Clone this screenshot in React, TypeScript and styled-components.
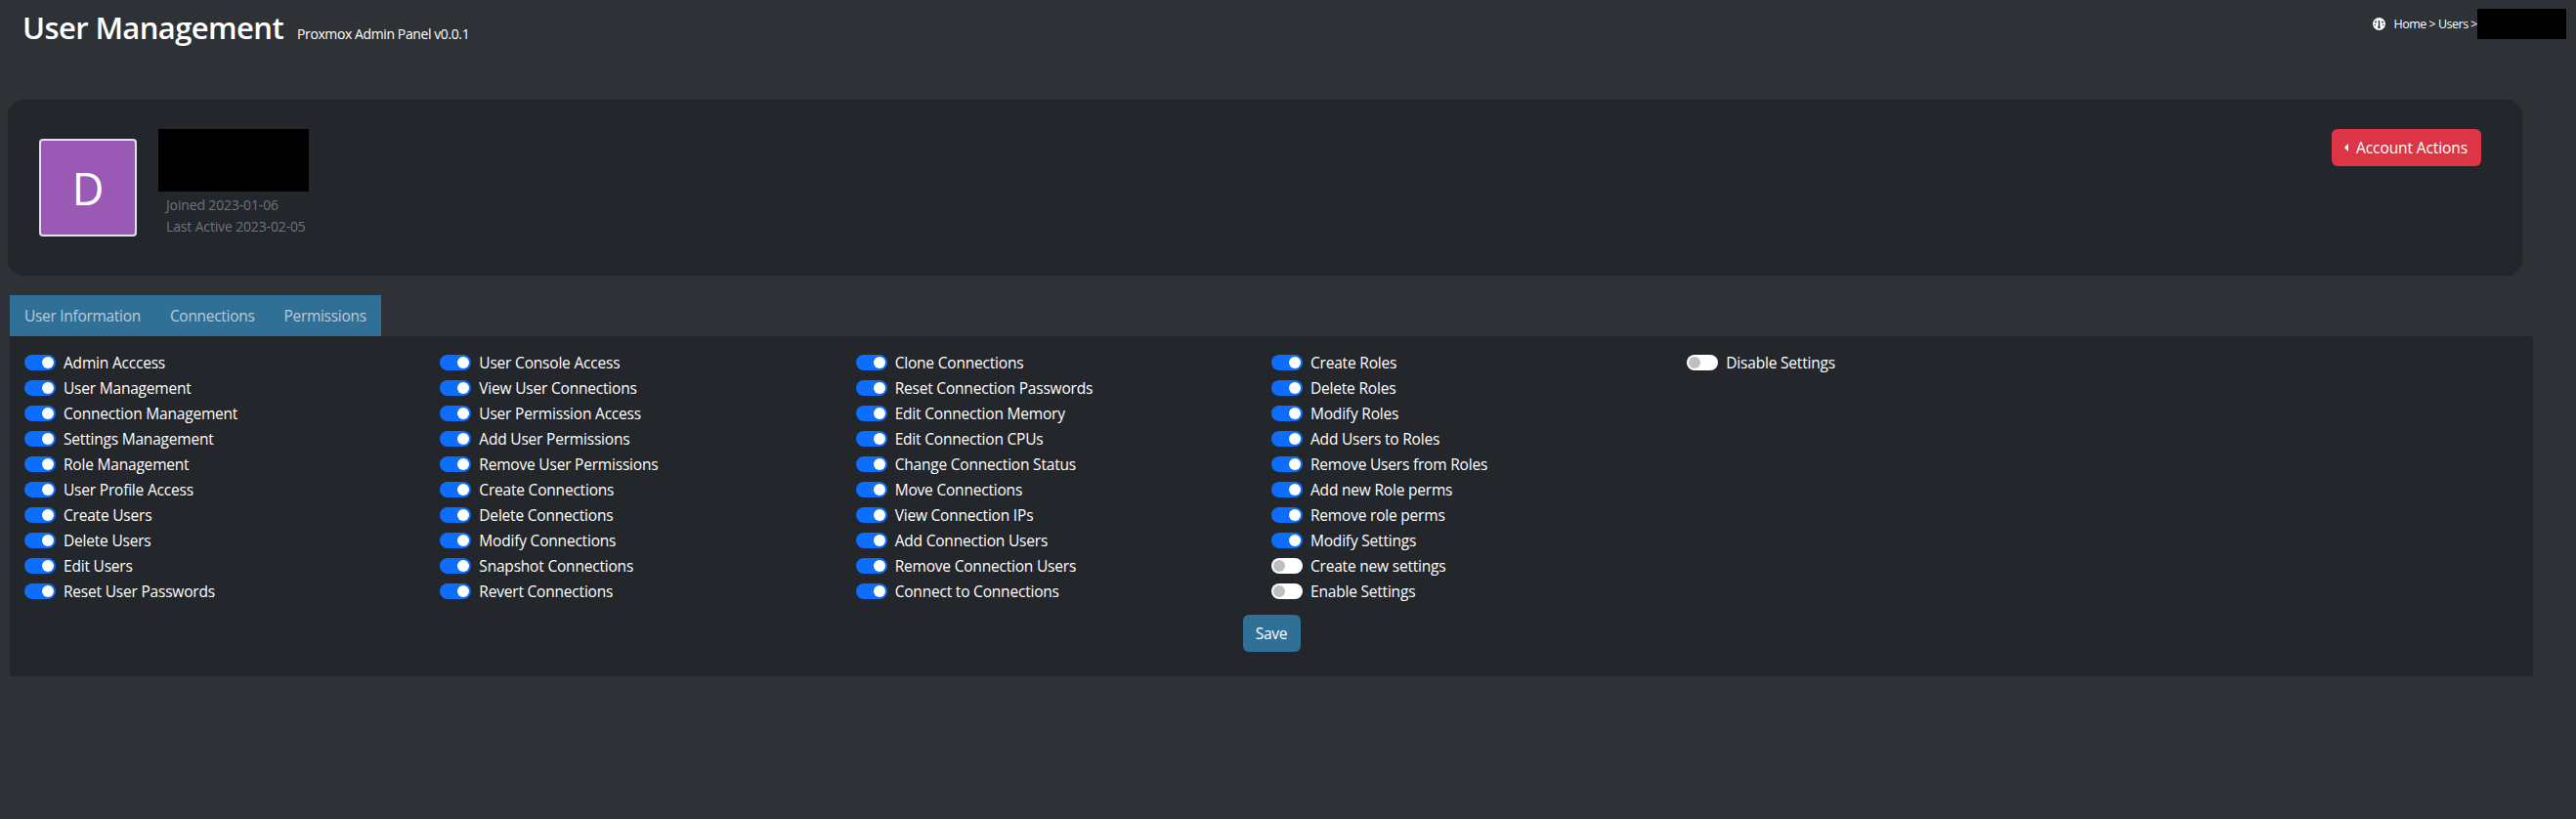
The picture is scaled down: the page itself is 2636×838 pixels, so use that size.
import { createGlobalStyle } from "styled-components";
import styled from "styled-components";

const GlobalStyle = createGlobalStyle`
  html, body {
    margin: 0;
    padding: 0;
    background: #2e3135;
    color: #fff;
    font-family: "Open Sans", "Noto Sans", sans-serif;
  }
`;

const Page = styled.div`
  height: 838px;
  overflow: hidden;
  padding: 0 55px 0 8px;
  box-sizing: border-box;
`;

// START header ------------------------------------
const Header = styled.header`
  display: flex;
  justify-content: space-between;
  height: 102px;
  margin-right: -45px;
  padding-left: 15px;
`;

const TitleGroup = styled.div`
  display: flex;
  align-items: baseline;
  gap: 14px;
  height: 58px;
  padding-top: 6px;
`;

const Title = styled.h1`
  margin: 0;
  font-size: 31px;
  font-weight: 600;
  line-height: 44px;
  letter-spacing: -0.6px;
`;

const Subtitle = styled.span`
  font-size: 14px;
  letter-spacing: -0.4px;
`;

const Crumbs = styled.div`
  display: flex;
  align-items: flex-start;
  height: 40px;
  padding-top: 9px;
`;

const CrumbText = styled.span`
  display: flex;
  align-items: center;
  gap: 8px;
  height: 31px;
  font-size: 12.5px;
  letter-spacing: -0.5px;
`;

const Redacted = styled.div<{ $w: number; $h: number }>`
  width: ${(p) => p.$w}px;
  height: ${(p) => p.$h}px;
  background: #000;
`;
// END header ------------------------------------

// START profile card ------------------------------------
const ProfileCard = styled.section`
  display: flex;
  justify-content: space-between;
  height: 180px;
  box-sizing: border-box;
  padding: 30px 42px 0 32px;
  background: #23262a;
  border-radius: 16px;
`;

const ProfileLeft = styled.div`
  display: flex;
  gap: 22px;
`;

const Avatar = styled.div`
  display: flex;
  align-items: center;
  justify-content: center;
  width: 100px;
  height: 100px;
  margin-top: 10px;
  box-sizing: border-box;
  background: #9b59b6;
  border: 2px solid #dee2e6;
  border-radius: 4px;
  font-size: 45px;
`;

const Meta = styled.div`
  display: flex;
  flex-direction: column;
`;

const MetaLines = styled.div`
  padding: 3px 0 0 8px;
  font-size: 14px;
  line-height: 22px;
  letter-spacing: -0.15px;
  color: #6c757d;
`;

const ActionButton = styled.button`
  display: flex;
  align-items: center;
  gap: 8px;
  height: 38px;
  padding: 0 14px 0 13px;
  background: #dc3545;
  border: 0;
  border-radius: 6px;
  color: #fff;
  font-family: inherit;
  font-size: 15.5px;
  letter-spacing: -0.1px;
`;

const CaretLeft = styled.i`
  border-top: 4px solid transparent;
  border-bottom: 4px solid transparent;
  border-right: 4px solid #fff;
`;
// END profile card ------------------------------------

// START tabs ------------------------------------
const TabBar = styled.nav`
  display: inline-flex;
  margin: 20px 0 0 2px;
  background: #317096;
  vertical-align: top;
`;

const Tab = styled.a`
  display: block;
  height: 42px;
  line-height: 42px;
  padding: 0 15px;
  font-size: 15.5px;
  letter-spacing: -0.3px;
  color: rgba(255, 255, 255, 0.65);
`;

const Panel = styled.section`
  height: 348px;
  box-sizing: border-box;
  margin: 0 -11px 0 2px;
  padding: 14px 15px 0;
  background: #23262a;
  border-radius: 0 4px 4px 4px;
`;

const PermGrid = styled.div`
  display: grid;
  grid-template-columns: repeat(6, 1fr);
  grid-template-rows: repeat(10, 26px);
  grid-auto-flow: column;
`;

const PermRow = styled.label`
  display: flex;
  align-items: center;
  gap: 8px;
  height: 26px;
  font-size: 15.5px;
  letter-spacing: -0.2px;
  white-space: nowrap;
`;

const Switch = styled.span<{ $on: boolean }>`
  display: flex;
  align-items: center;
  justify-content: ${(p) => (p.$on ? "flex-end" : "flex-start")};
  width: 32px;
  height: 16px;
  box-sizing: border-box;
  padding: 0 2px;
  background: ${(p) => (p.$on ? "#0d6efd" : "#fff")};
  border-radius: 8px;
  &::after {
    content: "";
    width: 12px;
    height: 12px;
    border-radius: 50%;
    background: ${(p) => (p.$on ? "#fff" : "#bfbfbf")};
  }
`;

const SaveRow = styled.div`
  display: flex;
  justify-content: center;
  margin-top: 11px;
`;

const SaveButton = styled.button`
  width: 59px;
  height: 38px;
  background: #317096;
  border: 0;
  border-radius: 6px;
  color: #fff;
  font-family: inherit;
  font-size: 15.5px;
  letter-spacing: -0.3px;
`;
// END tabs ------------------------------------

const permissions: [string, boolean][] = [
  ["Admin Acccess", true],
  ["User Management", true],
  ["Connection Management", true],
  ["Settings Management", true],
  ["Role Management", true],
  ["User Profile Access", true],
  ["Create Users", true],
  ["Delete Users", true],
  ["Edit Users", true],
  ["Reset User Passwords", true],
  ["User Console Access", true],
  ["View User Connections", true],
  ["User Permission Access", true],
  ["Add User Permissions", true],
  ["Remove User Permissions", true],
  ["Create Connections", true],
  ["Delete Connections", true],
  ["Modify Connections", true],
  ["Snapshot Connections", true],
  ["Revert Connections", true],
  ["Clone Connections", true],
  ["Reset Connection Passwords", true],
  ["Edit Connection Memory", true],
  ["Edit Connection CPUs", true],
  ["Change Connection Status", true],
  ["Move Connections", true],
  ["View Connection IPs", true],
  ["Add Connection Users", true],
  ["Remove Connection Users", true],
  ["Connect to Connections", true],
  ["Create Roles", true],
  ["Delete Roles", true],
  ["Modify Roles", true],
  ["Add Users to Roles", true],
  ["Remove Users from Roles", true],
  ["Add new Role perms", true],
  ["Remove role perms", true],
  ["Modify Settings", true],
  ["Create new settings", false],
  ["Enable Settings", false],
  ["Disable Settings", false],
];

// round gauge in the breadcrumb
const GaugeIcon = () => (
  <svg width="13" height="13" viewBox="0 0 13 13" aria-hidden="true">
    <circle cx="6.5" cy="6.5" r="6.5" fill="#fff" />
    <path d="M6.5 3v6.5" stroke="#23262a" strokeWidth="1.4" />
    <circle cx="6.5" cy="10" r="1.2" fill="#23262a" />
    <circle cx="3" cy="4.5" r="0.9" fill="#23262a" />
    <circle cx="10" cy="4.5" r="0.9" fill="#23262a" />
    <circle cx="2.2" cy="7.5" r="0.7" fill="#23262a" />
    <circle cx="10.8" cy="7.5" r="0.7" fill="#23262a" />
  </svg>
);

export default function App() {
  return (
    <Page>
      <GlobalStyle />
      <Header>
        <TitleGroup>
          <Title>User Management</Title>
          <Subtitle>Proxmox Admin Panel v0.0.1</Subtitle>
        </TitleGroup>
        <Crumbs>
          <CrumbText>
            <GaugeIcon />
            Home &gt; Users &gt;
          </CrumbText>
          <Redacted $w={91} $h={31} />
        </Crumbs>
      </Header>
      <ProfileCard>
        <ProfileLeft>
          <Avatar>D</Avatar>
          <Meta>
            <Redacted $w={154} $h={64} />
            <MetaLines>
              <div>Joined 2023-01-06</div>
              <div>Last Active 2023-02-05</div>
            </MetaLines>
          </Meta>
        </ProfileLeft>
        <ActionButton>
          <CaretLeft />
          Account Actions
        </ActionButton>
      </ProfileCard>
      <TabBar>
        <Tab>User Information</Tab>
        <Tab>Connections</Tab>
        <Tab>Permissions</Tab>
      </TabBar>
      <Panel>
        <PermGrid>
          {permissions.map(([name, on]) => (
            <PermRow key={name}>
              <Switch $on={on} />
              {name}
            </PermRow>
          ))}
        </PermGrid>
        <SaveRow>
          <SaveButton>Save</SaveButton>
        </SaveRow>
      </Panel>
    </Page>
  );
}
